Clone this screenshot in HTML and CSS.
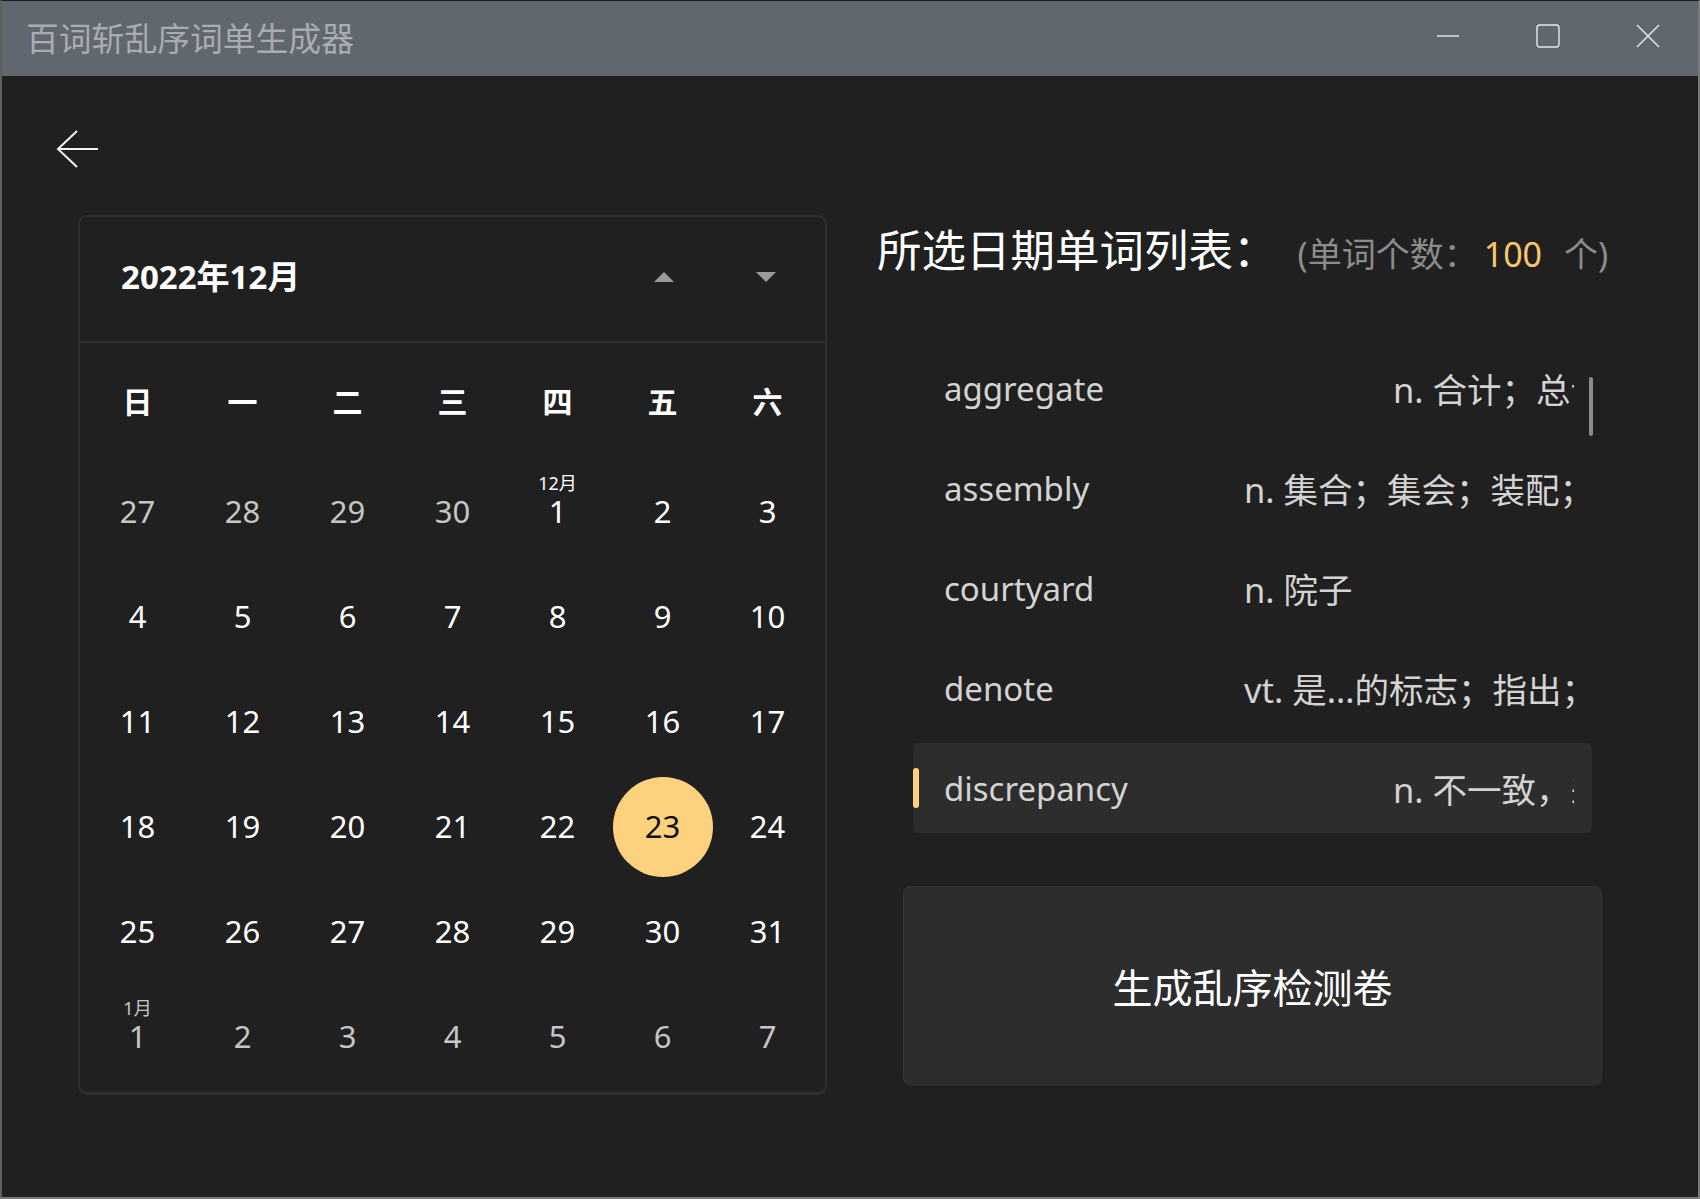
FILE: index.html
```html
<!DOCTYPE html>
<html lang="zh-CN">
<head>
<meta charset="utf-8">
<title>百词斩乱序词单生成器</title>
<link rel="stylesheet" href="styles.css">
</head>
<body>
<div class="window">
  <div class="titlebar">
    <div class="app-title">百词斩乱序词单生成器</div>
    <div class="controls">
      <div class="ctl"><svg width="24" height="24" viewBox="0 0 24 24"><line x1="1" y1="12" x2="23" y2="12"/></svg></div>
      <div class="ctl"><svg width="24" height="24" viewBox="0 0 24 24"><rect x="1" y="1" width="22" height="22" rx="3"/></svg></div>
      <div class="ctl"><svg width="24" height="24" viewBox="0 0 24 24"><line x1="1" y1="1" x2="23" y2="23"/><line x1="23" y1="1" x2="1" y2="23"/></svg></div>
    </div>
  </div>
  <div class="content">
    <div class="back"><svg width="44" height="44" viewBox="0 0 44 44"><path d="M42 22H2M21 4L2 22l19 18"/></svg></div>
    <div class="main">
      <div class="calendar">
        <div class="cal-head">
          <div class="cal-title">2022年12月</div>
          <div class="cal-nav"><span class="tri up"></span><span class="tri down"></span></div>
        </div>
        <div class="cal-body">
          <div class="weekdays">
            <div class="wd">日</div><div class="wd">一</div><div class="wd">二</div><div class="wd">三</div><div class="wd">四</div><div class="wd">五</div><div class="wd">六</div>
          </div>
          <div class="days">
            <div class="day other"><span>27</span></div><div class="day other"><span>28</span></div><div class="day other"><span>29</span></div><div class="day other"><span>30</span></div><div class="day"><span class="mlabel">12月</span><span>1</span></div><div class="day"><span>2</span></div><div class="day"><span>3</span></div>
            <div class="day"><span>4</span></div><div class="day"><span>5</span></div><div class="day"><span>6</span></div><div class="day"><span>7</span></div><div class="day"><span>8</span></div><div class="day"><span>9</span></div><div class="day"><span>10</span></div>
            <div class="day"><span>11</span></div><div class="day"><span>12</span></div><div class="day"><span>13</span></div><div class="day"><span>14</span></div><div class="day"><span>15</span></div><div class="day"><span>16</span></div><div class="day"><span>17</span></div>
            <div class="day"><span>18</span></div><div class="day"><span>19</span></div><div class="day"><span>20</span></div><div class="day"><span>21</span></div><div class="day"><span>22</span></div><div class="day"><span class="circle">23</span></div><div class="day"><span>24</span></div>
            <div class="day"><span>25</span></div><div class="day"><span>26</span></div><div class="day"><span>27</span></div><div class="day"><span>28</span></div><div class="day"><span>29</span></div><div class="day"><span>30</span></div><div class="day"><span>31</span></div>
            <div class="day other"><span class="mlabel">1月</span><span>1</span></div><div class="day other"><span>2</span></div><div class="day other"><span>3</span></div><div class="day other"><span>4</span></div><div class="day other"><span>5</span></div><div class="day other"><span>6</span></div><div class="day other"><span>7</span></div>
          </div>
        </div>
      </div>
      <div class="right">
        <div class="list-title"><span class="lt-main">所选日期单词列表：</span><span class="lt-count">(单词个数：<span class="num">100</span><span class="unit">个</span>)</span></div>
        <div class="list-wrap">
          <div class="row"><div class="item"><div class="word">aggregate</div><div class="def"><span class="shift">n. 合计；总计；集合体</span></div></div></div>
          <div class="row"><div class="item"><div class="word">assembly</div><div class="def">n. 集合；集会；装配；议会</div></div></div>
          <div class="row"><div class="item"><div class="word">courtyard</div><div class="def">n. 院子</div></div></div>
          <div class="row"><div class="item"><div class="word">denote</div><div class="def">vt. 是...的标志；指出；表示</div></div></div>
          <div class="row"><div class="item sel"><div class="word">discrepancy</div><div class="def"><span class="shift">n. 不一致，差异</span></div></div></div>
          <div class="thumb"></div>
        </div>
        <div class="gen">生成乱序检测卷</div>
      </div>
    </div>
  </div>
</div>
</body>
</html>
```
FILE: styles.css
```css
* { box-sizing: border-box; margin: 0; padding: 0; }
html, body { width: 1700px; height: 1199px; overflow: hidden; background: #202020; }
body { font-family: "Noto Sans", "Noto Sans CJK SC", sans-serif; color: #fff; }

.window {
  width: 1700px; height: 1199px;
  border-top: 1px solid #1a1a1a;
  border-left: 2px solid #5f5f5f;
  border-right: 2px solid #7b7b7b;
  border-bottom: 2px solid #7b7b7b;
  display: flex; flex-direction: column;
  background: #202020;
}

.titlebar { height: 75px; flex: none; background: #61676f; display: flex; align-items: center; }
.app-title { padding-left: 24px; padding-bottom: 3px; font-family: "Noto Sans CJK SC", sans-serif; font-size: 32.8px; line-height: 1; color: #a9acb0; }
.controls { margin-left: auto; display: flex; height: 100%; }
.ctl { width: 100px; height: 100%; display: flex; align-items: center; justify-content: center; padding-bottom: 6px; }
.ctl svg { fill: none; stroke: #e8e9ea; stroke-width: 1.4; }

.content { flex: 1; display: flex; flex-direction: column; }
.back { margin: 51px 0 0 54px; width: 44px; height: 44px; }
.back svg { fill: none; stroke: #f2f2f2; stroke-width: 2; }
.main { display: flex; margin-top: 44px; padding-left: 76px; }

.calendar {
  width: 749px; height: 880px; flex: none;
  border: 2px solid #2f2f2f; border-bottom-width: 3px; border-radius: 9px;
  display: flex; flex-direction: column;
}
.cal-head { height: 126px; flex: none; display: flex; align-items: center; padding: 0 49px 5px 41px; border-bottom: 2px solid #2f2f2f; }
.cal-title { font-size: 33px; font-weight: 700; line-height: 1; color: #fff; }
.cal-nav { margin-left: auto; display: flex; gap: 82px; align-items: center; }
.tri { width: 0; height: 0; border-left: 10px solid transparent; border-right: 10px solid transparent; }
.tri.up { border-bottom: 10px solid #9b9b9b; }
.tri.down { border-top: 10px solid #9b9b9b; }

.cal-body { padding: 0 5px 3px; display: flex; flex-direction: column; }
.weekdays { height: 116px; display: grid; grid-template-columns: repeat(7, 105px); align-items: center; }
.wd { text-align: center; font-family: "Noto Sans CJK SC", sans-serif; font-weight: 700; font-size: 30px; line-height: 1; color: #fff; padding-bottom: 2px; }
.days { display: grid; grid-template-columns: repeat(7, 105px); grid-auto-rows: 105px; }
.day { position: relative; display: flex; align-items: center; justify-content: center; font-size: 31px; line-height: 1; color: #fff; }
.day.other { color: #c6c6c6; }
.mlabel { position: absolute; top: 15px; left: 0; right: 0; text-align: center; font-size: 18px; line-height: 18px; }
.circle { width: 100px; height: 100px; border-radius: 50%; background: #fdd27e; color: #111; display: flex; align-items: center; justify-content: center; }

.right { margin-left: 50px; display: flex; flex-direction: column; width: 740px; }
.list-title { padding-top: 3px; height: 63px; line-height: 60px; display: flex; align-items: baseline; white-space: nowrap; }
.lt-main { font-size: 44.5px; color: #fff; font-family: "Noto Sans CJK SC", sans-serif; }
.lt-count { margin-left: 20px; font-size: 34px; color: #8c8c8c; }
.lt-count .num { color: #f8c76a; margin-left: 6px; }
.lt-count .unit { margin-left: 22px; }

.list-wrap { position: relative; margin: 60px 0 0 36px; width: 681px; }
.row { height: 100px; padding: 5px 0; }
.item { width: 679px; height: 90px; border-radius: 6px; display: flex; align-items: center; padding-left: 31px; position: relative; font-size: 33px; color: #d3d3d3; }
.item.sel { background: #2d2d2d; }
.item.sel::before { content: ""; position: absolute; left: 0; top: 25px; width: 6px; height: 40px; border-radius: 3px; background: #fdd27e; }
.word { width: 300px; flex: none; white-space: nowrap; }
.def { width: 330px; flex: none; white-space: nowrap; overflow: hidden; font-size: 34.5px; }
.shift { padding-left: 149px; }
.thumb { position: absolute; left: 676px; top: 39px; width: 4px; height: 59px; border-radius: 2px; background: #8b8b8b; }

.gen {
  margin: 48px 0 0 26px; width: 699px; height: 200px;
  background: #2d2d2d; border: 1px solid #353535; border-bottom-color: #292929; border-radius: 8px;
  display: flex; align-items: center; justify-content: center;
  font-family: "Noto Sans CJK SC", sans-serif; font-size: 40px; color: #fff;
}
```
